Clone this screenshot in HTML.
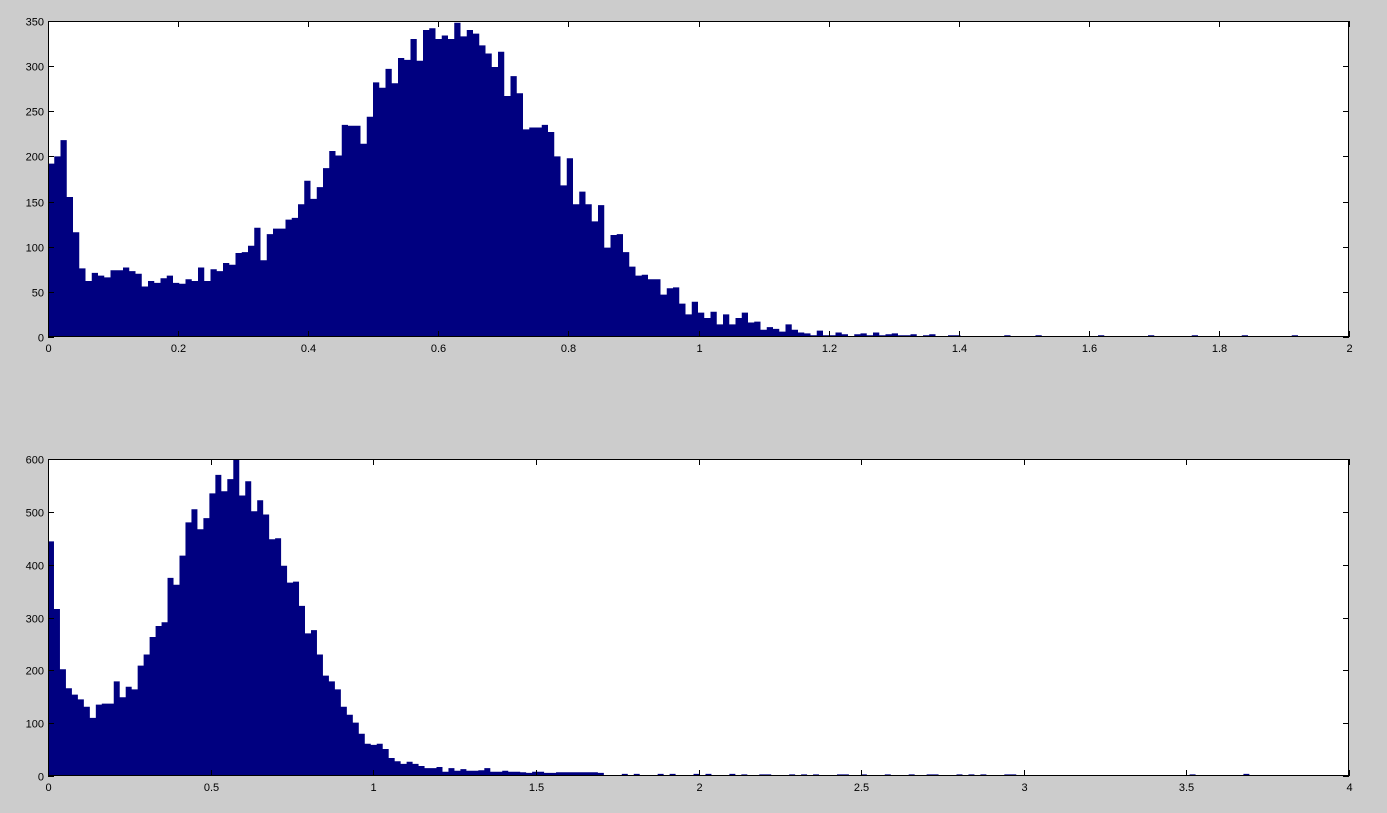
<!DOCTYPE html>
<html><head><meta charset="utf-8"><style>
html,body{margin:0;padding:0;background:#cccccc;width:1387px;height:813px;overflow:hidden}
svg text{font-family:"Liberation Sans",sans-serif;font-size:11px;fill:#000}
</style></head><body>
<svg id="s" width="1387" height="813" xmlns="http://www.w3.org/2000/svg"></svg>
<script>
(function(){
var s=document.getElementById('s'),out='';
function ax(x0,y0,x1,y1,xmax,ymax,xt,yt,bpx,data,tail){
 var W=x1-x0,H=y1-y0;
 out+='<rect x="'+x0+'" y="'+y0+'" width="'+W+'" height="'+H+'" fill="#fff"/>';
 var p='';
 function bar(i,v){var x=x0+i*bpx,h=v/ymax*H;if(x>=x1)return;p+='M'+x.toFixed(2)+' '+y1+'V'+(y1-h).toFixed(2)+'H'+Math.min(x1,x+bpx).toFixed(2)+'V'+y1+'Z';}
 data.forEach(function(v,i){if(v>0)bar(i,v)});
 tail.forEach(function(t){bar(t[0],t[1])});
 out+='<path d="'+p+'" fill="#000080"/>';
 out+='<line x1="'+x0+'" y1="'+(y1-0.5)+'" x2="'+x1+'" y2="'+(y1-0.5)+'" stroke="#000080"/>';
 out+='<rect x="'+(x0+0.5)+'" y="'+(y0+0.5)+'" width="'+(W-1)+'" height="'+(H-1)+'" fill="none" stroke="#000"/>';
 xt.forEach(function(t){var x=x0+t/xmax*W;x=Math.round(x)+0.5;
  out+='<line x1="'+x+'" y1="'+y1+'" x2="'+x+'" y2="'+(y1-6)+'" stroke="#000"/><line x1="'+x+'" y1="'+y0+'" x2="'+x+'" y2="'+(y0+6)+'" stroke="#000"/>';
  out+='<text x="'+x+'" y="'+(y1+15)+'" text-anchor="middle">'+t+'</text>';});
 yt.forEach(function(t){var y=y1-t/ymax*H;y=Math.round(y)+0.5;
  out+='<line x1="'+x0+'" y1="'+y+'" x2="'+(x0+6)+'" y2="'+y+'" stroke="#000"/><line x1="'+x1+'" y1="'+y+'" x2="'+(x1-6)+'" y2="'+y+'" stroke="#000"/>';
  out+='<text x="'+(x0-4)+'" y="'+(y+4)+'" text-anchor="end">'+t+'</text>';});
}
var dTop=[192,200,218,155,116,76,62,71,68,66,74,74,77,73,70,56,62,60,65,68,60,59,64,62,77,62,75,73,82,80,93,94,
101,121,85,114,120,120,130,132,147,173,153,166,187,206,201,235,234,234,214,244,282,276,297,281,309,307,
330,306,340,342,330,334,330,348,333,340,336,323,314,299,316,267,289,270,230,232,232,235,227,
200,168,198,147,161,147,128,146,99,113,114,94,78,68,69,64,64,47,54,55,37,25,39,27,21,28,14,25,14,21,27,16,17,8,11,9,6,14,8,
5,4,2,7,2,2,5,3,1,3,4,2,5,2,3,4,2,2,3,1,2,3,1,1,2,0,1,0,1];
var ttail=[[145,2],[148,1],[153,2],[155,1],[158,2],[166,1],[168,2],[171,1],[176,2],[179,1],[183,2],[191,2],[199,2]];
ax(48,21,1349,337,2,350,[0,0.2,0.4,0.6,0.8,1,1.2,1.4,1.6,1.8,2],[0,50,100,150,200,250,300,350],6.25,dTop,ttail);
var dBot=[444,316,202,166,154,145,131,110,135,137,137,179,149,169,164,209,230,263,284,291,375,362,417,480,505,467,488,535,570,539,562,598,531,558,501,522,495,448,450,398,366,368,322,270,276,
230,190,179,164,131,116,101,80,61,59,61,51,34,28,23,27,23,19,15,15,17,8,15,10,13,10,10,11,15,8,
8,10,8,8,7,6,8,8,6,6,7,7,7,7,7,7,7,6];
var btail=[],i;
for(i=93;i<116;i++){ if(i%3!==1) btail.push([i,(i%2)?2:4]); }
for(i=116;i<163;i++){ if(i%4===0||i%7===0) btail.push([i,3]); }
btail.push([191,3]);btail.push([200,4]);
ax(48,459,1349,776,4,600,[0,0.5,1,1.5,2,2.5,3,3.5,4],[0,100,200,300,400,500,600],5.977,dBot,btail);
s.innerHTML=out;
})();
</script>
</body></html>
